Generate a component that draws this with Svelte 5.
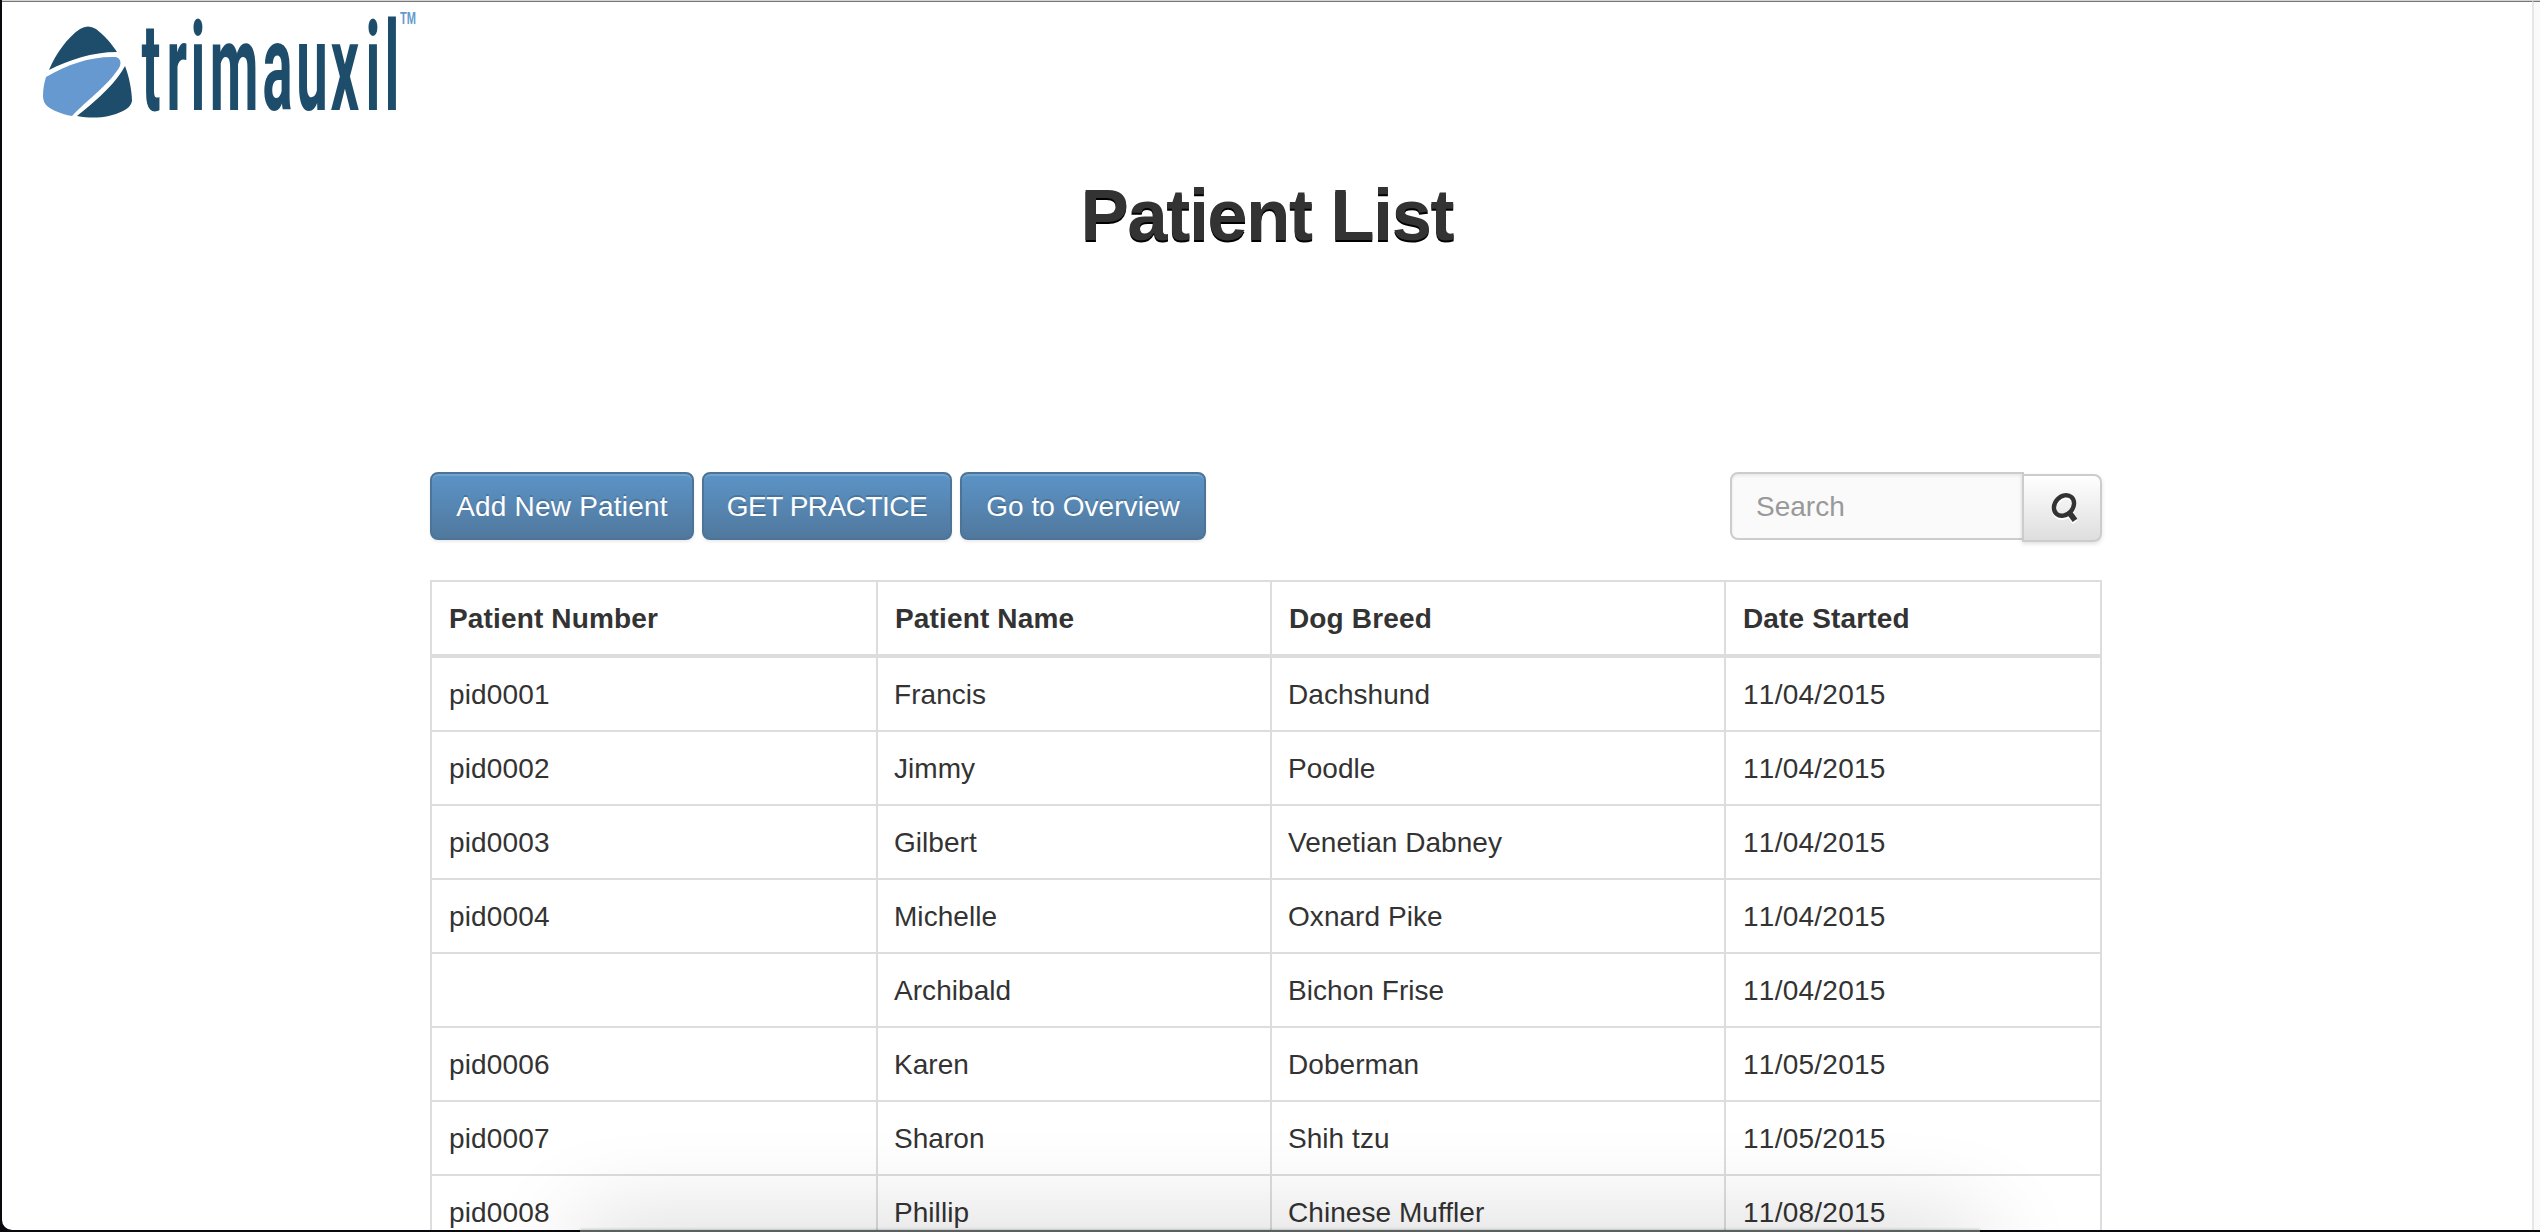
<script>
  const actions = [
    { label: 'Add New Patient', kind: 'add' },
    { label: 'GET PRACTICE', kind: 'practice' },
    { label: 'Go to Overview', kind: 'overview' }
  ];
  const columns = ['Patient Number', 'Patient Name', 'Dog Breed', 'Date Started'];
  const patients = [
    ['pid0001', 'Francis', 'Dachshund', '11/04/2015'],
    ['pid0002', 'Jimmy', 'Poodle', '11/04/2015'],
    ['pid0003', 'Gilbert', 'Venetian Dabney', '11/04/2015'],
    ['pid0004', 'Michelle', 'Oxnard Pike', '11/04/2015'],
    ['', 'Archibald', 'Bichon Frise', '11/04/2015'],
    ['pid0006', 'Karen', 'Doberman', '11/05/2015'],
    ['pid0007', 'Sharon', 'Shih tzu', '11/05/2015'],
    ['pid0008', 'Phillip', 'Chinese Muffler', '11/08/2015']
  ];
</script>

<div class="desktop">
  <div class="window">
    <main class="page">
      <header>
        <svg class="logo" width="440" height="126" viewBox="0 0 440 126" role="img" aria-label="trimauxil">
          <g transform="translate(0 1)">
            <path fill="#1d4d6b" d="M48 67 C55 50 67 34 79 26 Q87 21 95 26 C103 32 111 41 116 49 C91 49 68 57 48 67Z" />
            <path fill="#6699cf" d="M45 74 C67 61 91 53 115 54 Q121 56 119 63 C110 80 86 97 71 113 C60 111 51 107 46 103 Q42 99 42 93 C42 87 43 80 45 74Z" />
            <path fill="#1d4d6b" d="M124 63 C128 73 131 88 131 98 Q130 104 122 108 C108 115 92 116 76 113 C92 100 114 82 124 63Z" />
          </g>
          <g transform="translate(0 108) scale(0.45 1)">
            <text class="wordmark" x="312 368 421 464 581 656 732 810 852" y="0">trimauxil</text>
          </g>
          <text class="tm" x="399" y="22" textLength="16" lengthAdjust="spacingAndGlyphs">TM</text>
        </svg>
        <h1>Patient List</h1>
      </header>

      <section class="content">
        <div class="toolbar">
          <div class="actions">
            {#each actions as a}
              <button class="btn {a.kind}">{a.label}</button>
            {/each}
          </div>
          <div class="search">
            <input type="text" placeholder="Search" />
            <button class="go" aria-label="Search">
              <svg width="30" height="34" viewBox="0 0 30 34">
                <g fill="none" stroke="#fff" transform="translate(0 2)">
                  <ellipse cx="14" cy="13.5" rx="9" ry="11.2" stroke-width="4.4" transform="rotate(42 14 13.5)" />
                  <path d="M18.6 19.6 L25 28.4" stroke-width="5.8" />
                </g>
                <g fill="none" stroke="#333">
                  <ellipse cx="14" cy="13.5" rx="9" ry="11.2" stroke-width="4.4" transform="rotate(42 14 13.5)" />
                  <path d="M18.6 19.6 L25 28.4" stroke-width="5.8" />
                </g>
              </svg>
            </button>
          </div>
        </div>

        <table>
          <colgroup><col class="c1" /><col class="c2" /><col class="c3" /><col class="c4" /></colgroup>
          <thead>
            <tr>{#each columns as c}<th>{c}</th>{/each}</tr>
          </thead>
          <tbody>
            {#each patients as row}
              <tr>{#each row as cell}<td>{cell}</td>{/each}</tr>
            {/each}
          </tbody>
        </table>
      </section>
    </main>
    <div class="scrollbar"></div>
  </div>
  <div class="dock"></div>
</div>

<style>
  :global(body) { background: #0a090d; }
  .desktop {
    position: relative;
    box-sizing: border-box;
    width: 2540px;
    height: 1232px;
    padding: 0 0 2px 2px;
    overflow: hidden;
    background: #0a090d;
    font: 28px/40px 'Liberation Sans', Arial, sans-serif;
    color: #333;
  }
  .window {
    box-sizing: border-box;
    display: flex;
    height: 1230px;
    border-top: 1px solid #d4d4d4;
    border-radius: 0 0 0 10px;
    overflow: hidden;
    background: #fff;
  }
  .page {
    flex: 1;
    border-top: 1px solid #777;
    overflow: hidden;
  }
  .scrollbar {
    width: 6px;
    border-top: 1px solid #777;
    border-left: 2px solid #e6e6e6;
    background: #fafafa;
  }
  header { height: 470px; }
  .logo { display: block; margin-left: -1px; overflow: visible; }
  .wordmark { font: 700 125px Roboto, sans-serif; fill: #1d4d6b; }
  .tm { font: bold 16px 'Liberation Sans', sans-serif; fill: #6699cf; }
  h1 {
    margin: 47px 0 0;
    font-size: 72px;
    line-height: 80px;
    letter-spacing: -1.3px;
    text-align: center;
    text-shadow: 0 2px 0 #000;
  }
  .content { width: 1672px; margin-left: 428px; }
  .toolbar { display: flex; justify-content: space-between; height: 108px; }
  .actions { display: flex; gap: 8px; }
  .btn, .go, input { box-sizing: border-box; height: 68px; margin: 0; font: inherit; }
  .btn {
    padding: 13px 0 11px;
    border: 2px solid #4c7499;
    border-radius: 8px;
    background: linear-gradient(#5c94c7, #50789d);
    box-shadow: inset 0 2px 0 rgba(255, 255, 255, 0.15), 0 2px 3px rgba(0, 0, 0, 0.08);
    color: #fff;
    text-shadow: 0 -2px 0 rgba(0, 0, 0, 0.16);
    white-space: nowrap;
  }
  .add { width: 264px; letter-spacing: 0.2px; }
  .practice { width: 250px; letter-spacing: -0.5px; }
  .overview { width: 246px; letter-spacing: 0.05px; }
  .search { display: flex; }
  input {
    width: 294px;
    padding: 13px 24px 11px;
    border: 2px solid #ccc;
    border-radius: 8px 0 0 8px;
    outline: none;
    background: #fafafa;
    box-shadow: inset 0 2px 3px rgba(0, 0, 0, 0.07);
    letter-spacing: 0;
  }
  input::placeholder { color: #999; opacity: 1; }
  .go {
    display: flex;
    width: 80px;
    margin: 2px 0 0 -2px;
    padding: 16px 0 0 26px;
    border: 2px solid #ccc;
    border-radius: 0 8px 8px 0;
    background: linear-gradient(#fff, #dedede);
    box-shadow: inset 0 2px 0 rgba(255, 255, 255, 0.6), 0 2px 4px rgba(0, 0, 0, 0.12);
  }
  table {
    width: 1672px;
    table-layout: fixed;
    border-collapse: separate;
    border-spacing: 0;
    border: 2px solid #ddd;
    border-width: 2px 0 0 2px;
  }
  .c1 { width: 446px; }
  .c2 { width: 394px; }
  .c3 { width: 454px; }
  .c4 { width: 376px; }
  th, td {
    height: 40px;
    padding: 17px 16px 15px 17px;
    border: 0 solid #ddd;
    border-width: 0 2px 2px 0;
    text-align: left;
    letter-spacing: 0.15px;
  }
  th { border-bottom-width: 4px; }
  td:nth-child(2), td:nth-child(3) { padding-left: 16px; letter-spacing: 0.05px; }
  td:last-child { font-kerning: none; letter-spacing: 0.25px; }
  .dock {
    position: absolute;
    left: 580px;
    top: 1230px;
    width: 1400px;
    height: 60px;
    background: #59605f;
    box-shadow: 0 0 100px rgba(0, 0, 0, 0.2), 0 0 3px rgba(0, 0, 0, 0.3);
  }
</style>
